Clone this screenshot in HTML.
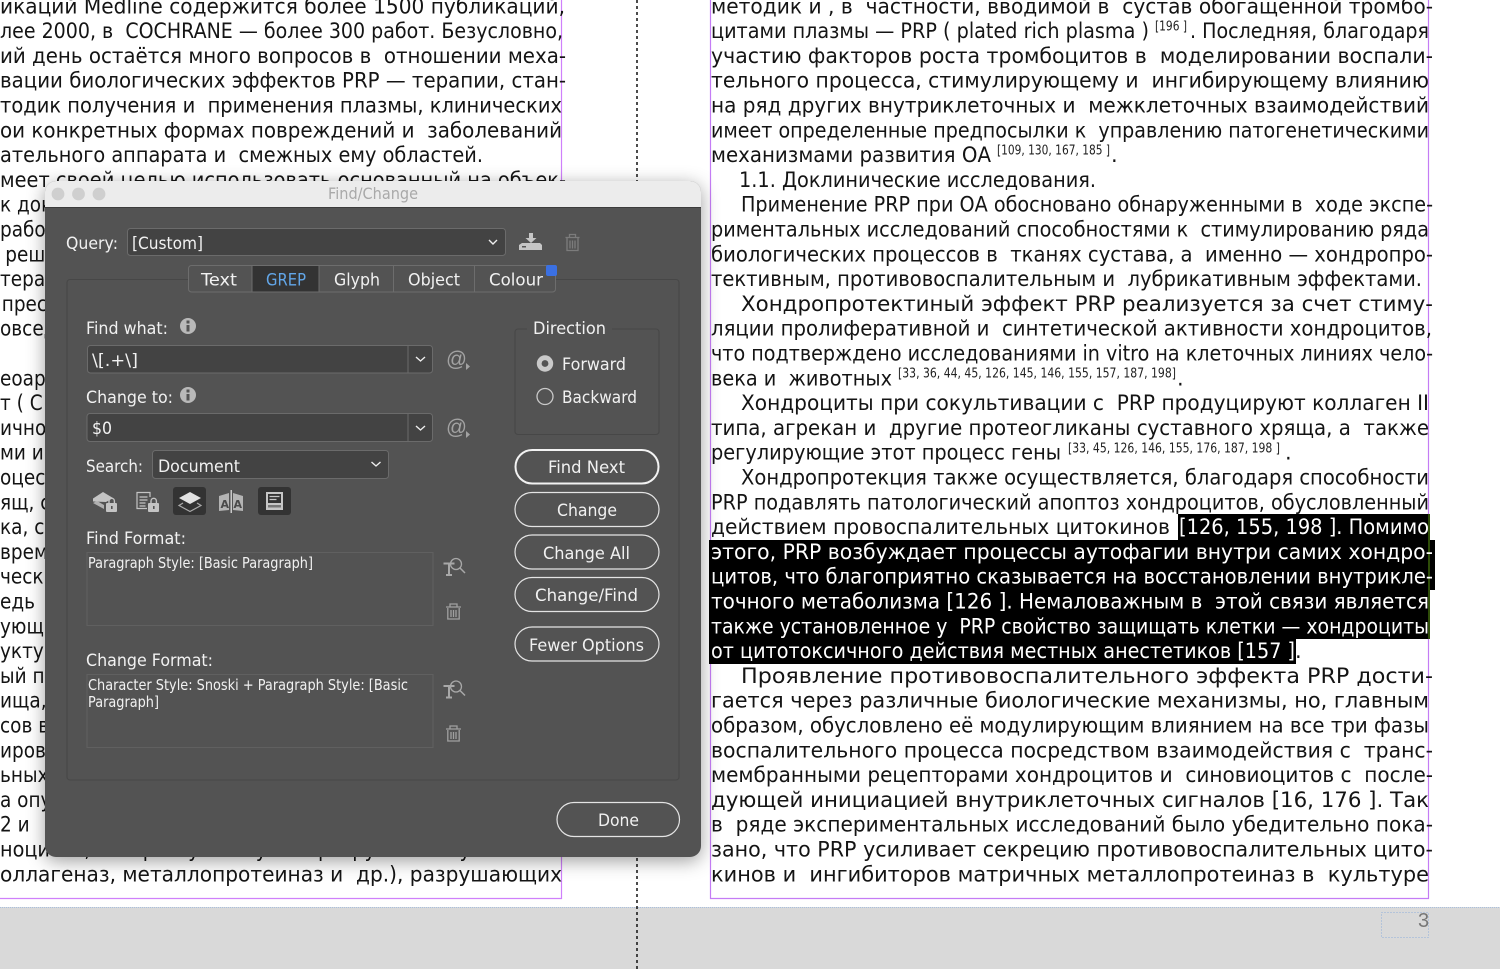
<!DOCTYPE html>
<html lang="ru"><head><meta charset="utf-8"><title>Find/Change</title>
<style>
html,body{margin:0;padding:0;width:1500px;height:969px;overflow:hidden;background:#fff}
svg{display:block}
text{white-space:pre}
.p{font:21px "DejaVu Sans",sans-serif;fill:#141414}
.w{fill:#fff}
.s{font:13px "DejaVu Sans",sans-serif;fill:#222}
.u{font:17px "DejaVu Sans",sans-serif;fill:#f1f1f1}
.f{font:15px "DejaVu Sans",sans-serif;fill:#f1f1f1}
</style></head><body>
<svg xmlns="http://www.w3.org/2000/svg" width="1500" height="969" viewBox="0 0 1500 969">
<defs><filter id="sh" x="-10%" y="-10%" width="120%" height="120%"><feDropShadow dx="0" dy="4" stdDeviation="9" flood-color="#000" flood-opacity=".38"/></filter></defs>
<rect x="0" y="907" width="1500" height="62" fill="#d9d9d9"/>
<line x1="0" y1="907.5" x2="1500" y2="907.5" stroke="#a9c0de" stroke-dasharray="1 1"/>
<path d="M0 898.5H561.5V0" fill="none" stroke="#cf80fb" stroke-width="1.200"/>
<path d="M710.5 0V898.5H1428.5V0" fill="none" stroke="#c47cf5" stroke-width="1.200"/>
<line x1="637" y1="0" x2="637" y2="969" stroke="#111" stroke-width="1.5" stroke-dasharray="3 3"/>
<rect x="1381.5" y="912.5" width="47" height="25" fill="none" stroke="#8fb0dc" stroke-dasharray="1 2"/>
<text x="1418" y="927" style="font:20px 'Liberation Sans',sans-serif;fill:#777">3</text>

<!-- selection -->
<path d="M1178 514H1430V540H1435V590H1430V639H1296V664H709V540H1178Z" fill="#000"/>
<line x1="1429" y1="514" x2="1429" y2="639" stroke="#5d9a10" stroke-width="1"/>

<g transform="translate(0,-0.3)">
<!-- left column -->
<text class="p" x="0" y="13.6" textLength="565" lengthAdjust="spacingAndGlyphs">икаций Medline содержится более 1500 публикаций,</text>
<text class="p" x="0" y="38.4" textLength="563" lengthAdjust="spacingAndGlyphs">лее 2000, в  COCHRANE — более 300 работ. Безусловно,</text>
<text class="p" x="0" y="63.2" textLength="566" lengthAdjust="spacingAndGlyphs">ий день остаётся много вопросов в  отношении меха-</text>
<text class="p" x="0" y="88" textLength="566" lengthAdjust="spacingAndGlyphs">вации биологических эффектов PRP — терапии, стан-</text>
<text class="p" x="0" y="112.8" textLength="562" lengthAdjust="spacingAndGlyphs">тодик получения и  применения плазмы, клинических</text>
<text class="p" x="0" y="137.6" textLength="562" lengthAdjust="spacingAndGlyphs">ои конкретных формах повреждений и  заболеваний</text>
<text class="p" x="0" y="162.4" textLength="483" lengthAdjust="spacingAndGlyphs">ательного аппарата и  смежных ему областей.</text>
<text class="p" x="0" y="187.2" textLength="566" lengthAdjust="spacingAndGlyphs">меет своей целью использовать основанный на объек-</text>
<g transform="scale(.88 1)">
<text class="p" x="0" y="212">к док</text>
<text class="p" x="0" y="236.8">рабо</text>
<text class="p" x="6" y="261.6">реш</text>
<text class="p" x="0" y="286.4">тера</text>
<text class="p" x="2" y="311.2">прес</text>
<text class="p" x="0" y="336">овсед</text>
<text class="p" x="0" y="385.6">еоар</text>
<text class="p" x="0" y="410.4">т ( С</text>
<text class="p" x="0" y="435.2">ично</text>
<text class="p" x="0" y="460">ми и</text>
<text class="p" x="0" y="484.8">оцес</text>
<text class="p" x="0" y="509.6">ящ, с</text>
<text class="p" x="0" y="534.4">ка, с</text>
<text class="p" x="0" y="559.2">врем</text>
<text class="p" x="0" y="584">ческ</text>
<text class="p" x="0" y="608.8">едь</text>
<text class="p" x="0" y="633.6">ующ</text>
<text class="p" x="0" y="658.4">уктур</text>
<text class="p" x="0" y="683.2">ый п</text>
<text class="p" x="0" y="708">ища,</text>
<text class="p" x="0" y="732.8">сов в</text>
<text class="p" x="0" y="757.6">ирова</text>
<text class="p" x="0" y="782.4">ьных</text>
<text class="p" x="0" y="807.2">а опу</text>
<text class="p" x="0" y="832">2 и</text>
</g>
<text class="p" x="0" y="856.8" textLength="562" lengthAdjust="spacingAndGlyphs">ноцитов, которые участвуют в разрушении суставного</text>
<text class="p" x="0" y="881.6" textLength="562" lengthAdjust="spacingAndGlyphs">оллагеназ, металлопротеиназ и  др.), разрушающих</text>

<!-- right column -->
<text class="p" x="711" y="13.6" textLength="722" lengthAdjust="spacingAndGlyphs">методик и , в  частности, вводимой в  сустав обогащённой тромбо-</text>
<text class="p" x="711" y="38.4" textLength="438" lengthAdjust="spacingAndGlyphs">цитами плазмы — PRP ( plated rich plasma )</text>
<text class="s" x="1155" y="31" textLength="32" lengthAdjust="spacingAndGlyphs">[196 ]</text>
<text class="p" x="1190" y="38.4" textLength="239" lengthAdjust="spacingAndGlyphs">. Последняя, благодаря</text>
<text class="p" x="711" y="63.2" textLength="722" lengthAdjust="spacingAndGlyphs">участию факторов роста тромбоцитов в  моделировании воспали-</text>
<text class="p" x="711" y="88" textLength="718" lengthAdjust="spacingAndGlyphs">тельного процесса, стимулирующему и  ингибирующему влиянию</text>
<text class="p" x="711" y="112.8" textLength="718" lengthAdjust="spacingAndGlyphs">на ряд других внутриклеточных и  межклеточных взаимодействий</text>
<text class="p" x="711" y="137.6" textLength="718" lengthAdjust="spacingAndGlyphs">имеет определенные предпосылки к  управлению патогенетическими</text>
<text class="p" x="711" y="162.4" textLength="280" lengthAdjust="spacingAndGlyphs">механизмами развития ОА</text>
<text class="s" x="997" y="155" textLength="113" lengthAdjust="spacingAndGlyphs">[109, 130, 167, 185 ]</text>
<text class="p" x="1111" y="162.4">.</text>
<text class="p" x="739" y="187.2" textLength="357" lengthAdjust="spacingAndGlyphs">1.1. Доклинические исследования.</text>
<text class="p" x="741" y="212" textLength="692" lengthAdjust="spacingAndGlyphs">Применение PRP при ОА обосновано обнаруженными в  ходе экспе-</text>
<text class="p" x="711" y="236.8" textLength="718" lengthAdjust="spacingAndGlyphs">риментальных исследований способностями к  стимулированию ряда</text>
<text class="p" x="711" y="261.6" textLength="722" lengthAdjust="spacingAndGlyphs">биологических процессов в  тканях сустава, а  именно — хондропро-</text>
<text class="p" x="711" y="286.4" textLength="711" lengthAdjust="spacingAndGlyphs">тективным, противовоспалительным и  лубрикативным эффектами.</text>
<text class="p" x="741" y="311.2" textLength="692" lengthAdjust="spacingAndGlyphs">Хондропротектиный эффект PRP реализуется за счет стиму-</text>
<text class="p" x="711" y="336" textLength="721" lengthAdjust="spacingAndGlyphs">ляции пролиферативной и  синтетической активности хондроцитов,</text>
<text class="p" x="711" y="360.8" textLength="722" lengthAdjust="spacingAndGlyphs">что подтверждено исследованиями in vitro на клеточных линиях чело-</text>
<text class="p" x="711" y="385.6" textLength="181" lengthAdjust="spacingAndGlyphs">века и  животных</text>
<text class="s" x="898" y="378" textLength="278" lengthAdjust="spacingAndGlyphs">[33, 36, 44, 45, 126, 145, 146, 155, 157, 187, 198]</text>
<text class="p" x="1177" y="385.6">.</text>
<text class="p" x="741" y="410.4" textLength="688" lengthAdjust="spacingAndGlyphs">Хондроциты при сокультивации с  PRP продуцируют коллаген II</text>
<text class="p" x="711" y="435.2" textLength="718" lengthAdjust="spacingAndGlyphs">типа, агрекан и  другие протеогликаны суставного хряща, а  также</text>
<text class="p" x="711" y="460" textLength="350" lengthAdjust="spacingAndGlyphs">регулирующие этот процесс гены</text>
<text class="s" x="1068" y="453" textLength="212" lengthAdjust="spacingAndGlyphs">[33, 45, 126, 146, 155, 176, 187, 198 ]</text>
<text class="p" x="1285" y="460">.</text>
<text class="p" x="741" y="484.8" textLength="688" lengthAdjust="spacingAndGlyphs">Хондропротекция также осуществляется, благодаря способности</text>
<text class="p" x="711" y="509.6" textLength="718" lengthAdjust="spacingAndGlyphs">PRP подавлять патологический апоптоз хондроцитов, обусловленный</text>
<text class="p" x="711" y="534.4" textLength="459" lengthAdjust="spacingAndGlyphs">действием провоспалительных цитокинов</text>
<text class="p w" x="1179" y="534.4" textLength="250" lengthAdjust="spacingAndGlyphs">[126, 155, 198 ]. Помимо</text>
<text class="p w" x="711" y="559.2" textLength="722" lengthAdjust="spacingAndGlyphs">этого, PRP возбуждает процессы аутофагии внутри самих хондро-</text>
<text class="p w" x="711" y="584" textLength="722" lengthAdjust="spacingAndGlyphs">цитов, что благоприятно сказывается на восстановлении внутрикле-</text>
<text class="p w" x="711" y="608.8" textLength="718" lengthAdjust="spacingAndGlyphs">точного метаболизма [126 ]. Немаловажным в  этой связи является</text>
<text class="p w" x="711" y="633.6" textLength="718" lengthAdjust="spacingAndGlyphs">также установленное у  PRP свойство защищать клетки — хондроциты</text>
<text class="p w" x="711" y="658.4" textLength="584" lengthAdjust="spacingAndGlyphs">от цитотоксичного действия местных анестетиков [157 ]</text>
<text class="p" x="1295" y="658.4">.</text>
<text class="p" x="741" y="683.2" textLength="692" lengthAdjust="spacingAndGlyphs">Проявление противовоспалительного эффекта PRP дости-</text>
<text class="p" x="711" y="708" textLength="718" lengthAdjust="spacingAndGlyphs">гается через различные биологические механизмы, но, главным</text>
<text class="p" x="711" y="732.8" textLength="718" lengthAdjust="spacingAndGlyphs">образом, обусловлено её модулирующим влиянием на все три фазы</text>
<text class="p" x="711" y="757.6" textLength="722" lengthAdjust="spacingAndGlyphs">воспалительного процесса посредством взаимодействия с  транс-</text>
<text class="p" x="711" y="782.4" textLength="722" lengthAdjust="spacingAndGlyphs">мембранными рецепторами хондроцитов и  синовиоцитов с  после-</text>
<text class="p" x="711" y="807.2" textLength="718" lengthAdjust="spacingAndGlyphs">дующей инициацией внутриклеточных сигналов [16, 176 ]. Так</text>
<text class="p" x="711" y="832" textLength="722" lengthAdjust="spacingAndGlyphs">в  ряде экспериментальных исследований было убедительно пока-</text>
<text class="p" x="711" y="856.8" textLength="722" lengthAdjust="spacingAndGlyphs">зано, что PRP усиливает секрецию противовоспалительных цито-</text>
<text class="p" x="711" y="881.6" textLength="718" lengthAdjust="spacingAndGlyphs">кинов и  ингибиторов матричных металлопротеиназ в  культуре</text>
</g>

<!-- dialog -->
<rect x="45" y="181" width="656" height="676" rx="11" fill="#535353" filter="url(#sh)"/>
<path d="M45 207V192a11 11 0 0 1 11-11H690a11 11 0 0 1 11 11V207Z" fill="#ececec"/>
<line x1="45" y1="207.5" x2="701" y2="207.5" stroke="#3c3c3c"/>
<circle cx="58" cy="194" r="6.4" fill="#cfcfcf"/><circle cx="78.5" cy="194" r="6.4" fill="#cfcfcf"/><circle cx="99" cy="194" r="6.4" fill="#cfcfcf"/>
<text x="328" y="199" textLength="90" lengthAdjust="spacingAndGlyphs" style="font:16px 'DejaVu Sans',sans-serif;fill:#a9a9a9">Find/Change</text>

<!-- query -->
<text class="u" x="66" y="249" textLength="52" lengthAdjust="spacingAndGlyphs">Query:</text>
<rect x="127.5" y="228.5" width="378" height="27" rx="3" fill="#434343" stroke="#6b6b6b"/>
<text class="u" x="132" y="249" textLength="71" lengthAdjust="spacingAndGlyphs">[Custom]</text>
<path d="M489 240l4 4 4-4" fill="none" stroke="#eee" stroke-width="1.4"/>
<path d="M529 233h4v5h3.500l-5.500 5-5.500-5h3.500z" fill="#c6c6c6"/>
<path d="M522 243h18l2 2v5h-23v-5z" fill="#c6c6c6"/><rect x="522" y="246" width="4" height="1.500" fill="#555"/>
<g fill="none" stroke="#7c7c7c" stroke-width="1.300"><path d="M565.500 237.500h14M569.500 237v-2.500h6v2.500M567 238v12.500h11V238M570 240.500v8M572.500 240.500v8M575 240.500v8"/></g>

<!-- panel -->
<rect x="67" y="279.500" width="612" height="500.500" rx="3" fill="none" stroke="#474747" stroke-width="1.100"/>

<!-- tabs -->
<rect x="188.500" y="265.500" width="367" height="26.500" rx="3" fill="#535353" stroke="#6d6d6d"/>
<rect x="252" y="266" width="67" height="25.500" fill="#333"/>
<path d="M252 266v26M319 266v26M393.500 266v26M474.500 266v26" stroke="#6d6d6d"/>
<text class="u" x="201" y="285.500" textLength="36" lengthAdjust="spacingAndGlyphs">Text</text>
<text class="u" x="266" y="285.500" textLength="40" lengthAdjust="spacingAndGlyphs" style="fill:#62a6e8">GREP</text>
<text class="u" x="334" y="285.500" textLength="46" lengthAdjust="spacingAndGlyphs">Glyph</text>
<text class="u" x="408" y="285.500" textLength="52" lengthAdjust="spacingAndGlyphs">Object</text>
<text class="u" x="489" y="285.500" textLength="54" lengthAdjust="spacingAndGlyphs">Colour</text>
<rect x="546" y="265" width="11" height="11" rx="2" fill="#3b70e2"/>

<!-- find what -->
<text class="u" x="86" y="334" textLength="82" lengthAdjust="spacingAndGlyphs">Find what:</text>
<circle cx="188" cy="326" r="8" fill="#b9b9b9"/><rect x="186.500" y="325" width="3" height="6.500" fill="#535353"/><rect x="186.500" y="320.500" width="3" height="3" fill="#535353"/>
<rect x="87.500" y="345.500" width="345" height="27.500" rx="3" fill="#434343" stroke="#6b6b6b"/>
<line x1="408" y1="346" x2="408" y2="373" stroke="#6b6b6b"/>
<path d="M416 357l4.500 4 4.500-4" fill="none" stroke="#eee" stroke-width="1.400"/>
<text class="u" x="92" y="366" textLength="46" lengthAdjust="spacingAndGlyphs">\[.+\]</text>
<text x="446" y="366" style="font:21px 'Liberation Sans',sans-serif;fill:#a2a2a2" textLength="21" lengthAdjust="spacingAndGlyphs">@</text>
<path d="M466 363l4 3.500-4 3.500z" fill="#a2a2a2"/>

<!-- change to -->
<text class="u" x="86" y="403" textLength="87" lengthAdjust="spacingAndGlyphs">Change to:</text>
<circle cx="188" cy="395" r="8" fill="#b9b9b9"/><rect x="186.500" y="394" width="3" height="6.500" fill="#535353"/><rect x="186.500" y="389.500" width="3" height="3" fill="#535353"/>
<rect x="87" y="413.500" width="345.500" height="28" rx="3" fill="#434343" stroke="#6b6b6b"/>
<line x1="408" y1="414" x2="408" y2="441" stroke="#6b6b6b"/>
<path d="M416 426l4.500 4 4.500-4" fill="none" stroke="#eee" stroke-width="1.400"/>
<text class="u" x="92" y="434" textLength="20" lengthAdjust="spacingAndGlyphs">$0</text>
<text x="446" y="434" style="font:21px 'Liberation Sans',sans-serif;fill:#a2a2a2" textLength="21" lengthAdjust="spacingAndGlyphs">@</text>
<path d="M466 431l4 3.500-4 3.500z" fill="#a2a2a2"/>

<!-- search -->
<text class="u" x="86" y="472" textLength="57" lengthAdjust="spacingAndGlyphs">Search:</text>
<rect x="152.500" y="450.500" width="236" height="28" rx="3" fill="#434343" stroke="#6b6b6b"/>
<text class="u" x="158" y="472" textLength="82" lengthAdjust="spacingAndGlyphs">Document</text>
<path d="M371.500 462l4.500 4 4.500-4" fill="none" stroke="#eee" stroke-width="1.400"/>

<!-- icon row -->
<rect x="173" y="487" width="33" height="28" rx="3" fill="#333"/>
<rect x="258" y="487" width="33" height="28" rx="3" fill="#333"/>
<path d="M103 492l10 6-7 4-13-.5v-3z" fill="#c4c4c4"/><path d="M93 503l4-2 7 4v4z" fill="#b0b0b0"/>
<path d="M109 503v-2a2.700 2.700 0 0 1 5.400 0v2" fill="none" stroke="#c4c4c4" stroke-width="1.400"/><rect x="106" y="503" width="11" height="9" rx="1" fill="#c4c4c4"/><rect x="111" y="506" width="1.600" height="3" fill="#535353"/>
<path d="M150 497v-4.500h-13v16h10M139.500 497h8M139.500 500h8M139.500 503h6M139.500 506h6" fill="none" stroke="#c4c4c4" stroke-width="1.200"/>
<path d="M151 503v-2a2.700 2.700 0 0 1 5.400 0v2" fill="none" stroke="#c4c4c4" stroke-width="1.400"/><rect x="148" y="503" width="11" height="9" rx="1" fill="#c4c4c4"/><rect x="153" y="506" width="1.600" height="3" fill="#535353"/>
<path d="M190 492l11 6-11 6-11-6z" fill="#e2e2e2"/><path d="M183 503l-4 2.500 11 6 11-6-4-2.500" fill="none" stroke="#aaa" stroke-width="1.200"/>
<path d="M219 496l10-3v17l-10 1zM243 496l-10-3v17l10 1z" fill="#b4b4b4"/><rect x="230.500" y="490" width="1.500" height="23" fill="#c8c8c8"/>
<text x="220.500" y="508" style="font:bold 11px 'DejaVu Sans',sans-serif;fill:#4a4a4a">A</text><text x="233.500" y="508" style="font:bold 11px 'DejaVu Sans',sans-serif;fill:#4a4a4a">A</text>
<rect x="266" y="492" width="17" height="18" fill="#c6c6c6"/><rect x="268" y="494" width="13" height="9" fill="#333"/><path d="M269.500 496.500h10M269.500 499.500h7" stroke="#c6c6c6" stroke-width="1.200"/><rect x="268" y="505" width="13" height="2.500" fill="#777"/>

<!-- find format -->
<text class="u" x="86" y="544" textLength="100" lengthAdjust="spacingAndGlyphs">Find Format:</text>
<rect x="87" y="552.500" width="346" height="73" fill="none" stroke="#606060"/>
<text class="f" x="88" y="568" textLength="225" lengthAdjust="spacingAndGlyphs">Paragraph Style: [Basic Paragraph]</text>
<g fill="none" stroke="#a8a8a8"><circle cx="456" cy="564" r="5.500" stroke-width="1.300"/><path d="M460 568l5 5" stroke-width="1.500"/><path d="M443.500 563.500h11M449 563.500v11.500M446 575h6" stroke-width="2"/></g>
<g fill="none" stroke="#a0a0a0" stroke-width="1.300"><path d="M446 607h15M450 606.500v-2.500h7v2.500M447.800 608v11h11.400v-11M451 610v7M453.500 610v7M456 610v7"/></g>

<!-- change format -->
<text class="u" x="86" y="666" textLength="127" lengthAdjust="spacingAndGlyphs">Change Format:</text>
<rect x="87" y="674.500" width="346" height="73" fill="none" stroke="#606060"/>
<text class="f" x="88" y="690" textLength="320" lengthAdjust="spacingAndGlyphs">Character Style: Snoski + Paragraph Style: [Basic</text>
<text class="f" x="88" y="707" textLength="71" lengthAdjust="spacingAndGlyphs">Paragraph]</text>
<g fill="none" stroke="#a8a8a8"><circle cx="456" cy="686.500" r="5.500" stroke-width="1.300"/><path d="M460 690.500l5 5" stroke-width="1.500"/><path d="M443.500 686h11M449 686v11.500M446 697.500h6" stroke-width="2"/></g>
<g fill="none" stroke="#a0a0a0" stroke-width="1.300"><path d="M446 729h15M450 728.500v-2.500h7v2.500M447.800 730v11h11.400v-11M451 732v7M453.500 732v7M456 732v7"/></g>

<!-- direction -->
<rect x="515" y="329" width="144" height="105.500" rx="3" fill="none" stroke="#474747" stroke-width="1.100"/>
<rect x="527" y="322" width="85" height="14" fill="#535353"/>
<text class="u" x="533" y="334" textLength="73" lengthAdjust="spacingAndGlyphs">Direction</text>
<circle cx="545" cy="363.500" r="8.200" fill="#c9c9c9"/><circle cx="545" cy="363.500" r="3.400" fill="#535353"/>
<text class="u" x="562" y="370" textLength="64" lengthAdjust="spacingAndGlyphs">Forward</text>
<circle cx="545" cy="396.500" r="8" fill="none" stroke="#c9c9c9" stroke-width="1.300"/>
<text class="u" x="562" y="403" textLength="75" lengthAdjust="spacingAndGlyphs">Backward</text>

<!-- buttons -->
<rect x="515.500" y="450" width="143" height="33.500" rx="16.700" fill="#535353" stroke="#f2f2f2" stroke-width="2"/>
<text class="u" x="548" y="473" textLength="77" lengthAdjust="spacingAndGlyphs">Find Next</text>
<rect x="515" y="492.500" width="144" height="34" rx="17" fill="none" stroke="#e4e4e4" stroke-width="1.200"/>
<text class="u" x="557" y="516" textLength="60" lengthAdjust="spacingAndGlyphs">Change</text>
<rect x="515" y="535" width="144" height="34" rx="17" fill="none" stroke="#e4e4e4" stroke-width="1.200"/>
<text class="u" x="543" y="559" textLength="87" lengthAdjust="spacingAndGlyphs">Change All</text>
<rect x="515" y="577.500" width="144" height="34" rx="17" fill="none" stroke="#e4e4e4" stroke-width="1.200"/>
<text class="u" x="535" y="601" textLength="103" lengthAdjust="spacingAndGlyphs">Change/Find</text>
<rect x="515" y="627" width="144" height="34" rx="17" fill="none" stroke="#e4e4e4" stroke-width="1.200"/>
<text class="u" x="529" y="651" textLength="115" lengthAdjust="spacingAndGlyphs">Fewer Options</text>
<rect x="557" y="802.500" width="122.500" height="34" rx="17" fill="none" stroke="#e4e4e4" stroke-width="1.200"/>
<text class="u" x="598" y="826" textLength="41" lengthAdjust="spacingAndGlyphs">Done</text>
</svg>
</body></html>
